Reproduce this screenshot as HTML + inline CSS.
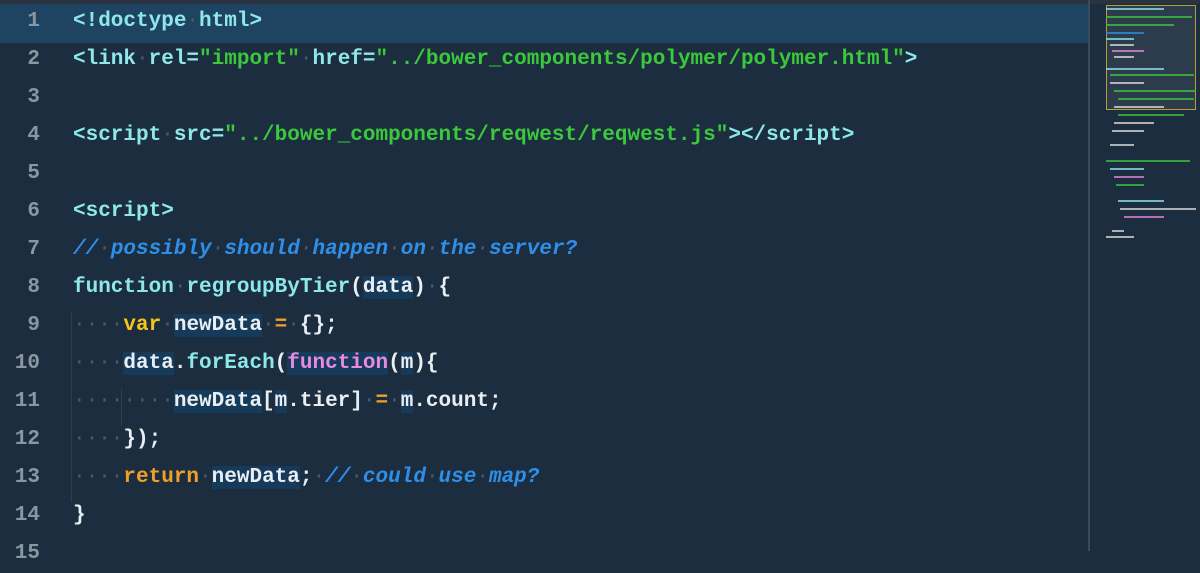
<!DOCTYPE html>
<html><head><style>
html,body{margin:0;width:1200px;height:551px;overflow:hidden;background:#1b2d3f;font-family:"Liberation Mono",monospace;font-size:21px;font-weight:bold;}
.top{position:absolute;left:0;top:0;width:1200px;height:4px;background:#2a3440}
.hl{position:absolute;left:0;top:4px;width:1088px;height:39px;background:#1f4461}
.mm{position:absolute;left:1088px;top:0;width:2px;height:551px;background:#3a4a5a}
.mmv{position:absolute;left:1106px;top:5px;width:88px;height:103px;border:1px solid #b8a030;background:rgba(80,90,100,.35)}
.l{position:absolute;left:0;height:38px;line-height:38px;white-space:pre;color:#e8eef2;top:0}
.n{display:inline-block;width:40px;text-align:right;color:#8a97a3;margin-right:33px}
.t{color:#8ee8ea}.s{color:#3cc83c}.k{color:#f5c518}.o{color:#f0a028}.c{color:#2f8fe8;font-style:italic}.p{color:#e88ae0}.f{color:#8ee8ea}.d{color:#4a5a68;font-weight:normal}
.b{background:#163a5a}
.ig{position:absolute;left:71px;width:1px;background:#2e4050}
</style></head><body>
<div class="top"></div><div class="hl"></div><div class="mm"></div>
<div class="ig" style="top:312px;height:190px"></div>
<div class="ig" style="left:121px;top:388px;height:38px"></div>
<div class="l" style="top:3px"><span class="n">1</span><span class="t">&lt;!doctype<span class="d">·</span>html&gt;</span></div>
<div class="l" style="top:41px"><span class="n">2</span><span class="t">&lt;link<span class="d">·</span>rel=</span><span class="s">"import"</span><span class="d">·</span><span class="t">href=</span><span class="s">"../bower_components/polymer/polymer.html"</span><span class="t">&gt;</span></div>
<div class="l" style="top:79px"><span class="n">3</span></div>
<div class="l" style="top:117px"><span class="n">4</span><span class="t">&lt;script<span class="d">·</span>src=</span><span class="s">"../bower_components/reqwest/reqwest.js"</span><span class="t">&gt;&lt;/script&gt;</span></div>
<div class="l" style="top:155px"><span class="n">5</span></div>
<div class="l" style="top:193px"><span class="n">6</span><span class="t">&lt;script&gt;</span></div>
<div class="l" style="top:231px"><span class="n">7</span><span class="c">//<span class="d">·</span>possibly<span class="d">·</span>should<span class="d">·</span>happen<span class="d">·</span>on<span class="d">·</span>the<span class="d">·</span>server?</span></div>
<div class="l" style="top:269px"><span class="n">8</span><span class="f">function</span><span class="d">·</span><span class="f">regroupByTier</span>(<span class="b">data</span>)<span class="d">·</span>{</div>
<div class="l" style="top:307px"><span class="n">9</span><span class="d">····</span><span class="k">var</span><span class="d">·</span><span class="b">newData</span><span class="d">·</span><span class="o">=</span><span class="d">·</span>{};</div>
<div class="l" style="top:345px"><span class="n">10</span><span class="d">····</span><span class="b">data</span>.<span class="f">forEach</span>(<span class="p b">function</span>(<span class="b">m</span>){</div>
<div class="l" style="top:383px"><span class="n">11</span><span class="d">········</span><span class="b">newData</span>[<span class="b">m</span>.tier]<span class="d">·</span><span class="o">=</span><span class="d">·</span><span class="b">m</span>.count;</div>
<div class="l" style="top:421px"><span class="n">12</span><span class="d">····</span>});</div>
<div class="l" style="top:459px"><span class="n">13</span><span class="d">····</span><span class="o">return</span><span class="d">·</span><span class="b">newData</span>;<span class="d">·</span><span class="c">//<span class="d">·</span>could<span class="d">·</span>use<span class="d">·</span>map?</span></div>
<div class="l" style="top:497px"><span class="n">14</span>}</div>
<div class="l" style="top:535px"><span class="n">15</span></div>
<div class="mmv"></div>
<svg style="position:absolute;left:1104px;top:5px" width="96" height="240">
<g stroke-width="1.5">
<line x1="2" y1="4" x2="60" y2="4" stroke="#8ee8ea"/><line x1="2" y1="12" x2="88" y2="12" stroke="#3cc83c"/>
<line x1="2" y1="20" x2="70" y2="20" stroke="#3cc83c"/><line x1="2" y1="28" x2="40" y2="28" stroke="#2f8fe8"/>
<line x1="2" y1="34" x2="30" y2="34" stroke="#8ee8ea"/><line x1="6" y1="40" x2="30" y2="40" stroke="#ddd"/>
<line x1="8" y1="46" x2="40" y2="46" stroke="#e88ae0"/><line x1="10" y1="52" x2="30" y2="52" stroke="#ddd"/>
<line x1="2" y1="64" x2="60" y2="64" stroke="#8ee8ea"/><line x1="6" y1="70" x2="90" y2="70" stroke="#3cc83c"/>
<line x1="6" y1="78" x2="40" y2="78" stroke="#ddd"/><line x1="10" y1="86" x2="92" y2="86" stroke="#3cc83c"/>
<line x1="14" y1="94" x2="90" y2="94" stroke="#3cc83c"/><line x1="10" y1="102" x2="60" y2="102" stroke="#ddd"/>
<line x1="14" y1="110" x2="80" y2="110" stroke="#3cc83c"/><line x1="10" y1="118" x2="50" y2="118" stroke="#ddd"/>
<line x1="8" y1="126" x2="40" y2="126" stroke="#ddd"/><line x1="6" y1="140" x2="30" y2="140" stroke="#ddd"/>
<line x1="2" y1="156" x2="86" y2="156" stroke="#3cc83c"/><line x1="6" y1="164" x2="40" y2="164" stroke="#8ee8ea"/>
<line x1="10" y1="172" x2="40" y2="172" stroke="#e88ae0"/><line x1="12" y1="180" x2="40" y2="180" stroke="#3cc83c"/>
<line x1="14" y1="196" x2="60" y2="196" stroke="#8ee8ea"/><line x1="16" y1="204" x2="92" y2="204" stroke="#ddd"/>
<line x1="20" y1="212" x2="60" y2="212" stroke="#e88ae0"/><line x1="8" y1="226" x2="20" y2="226" stroke="#ddd"/>
<line x1="2" y1="232" x2="30" y2="232" stroke="#ddd"/>
</g></svg>
</body></html>
